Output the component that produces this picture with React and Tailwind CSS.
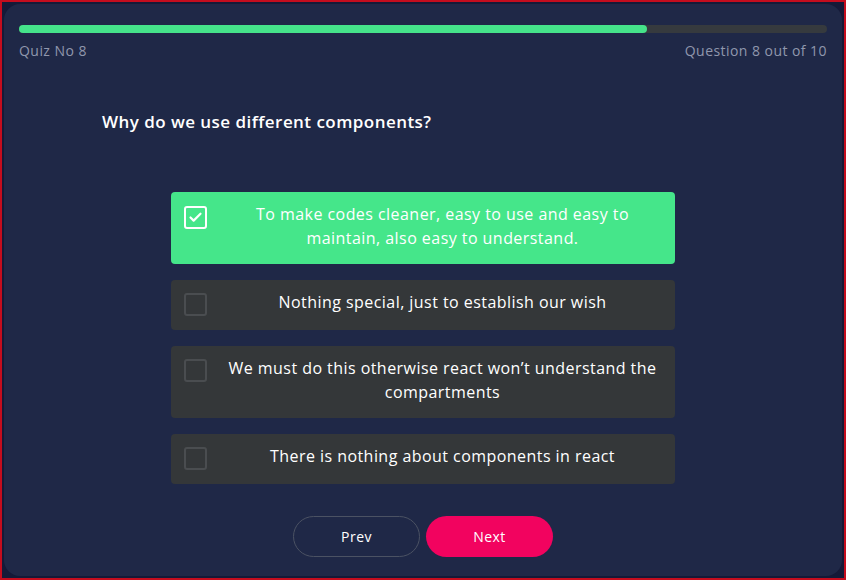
import { Check } from 'lucide-react'

const options = [
  'To make codes cleaner, easy to use and easy to maintain, also easy to understand.',
  'Nothing special, just to establish our wish',
  'We must do this otherwise react won’t understand the compartments',
  'There is nothing about components in react',
]

export default function App() {
  const selected = 0

  return (
    <div className="w-[846px] h-[580px] border-2 border-[#c40d1e] bg-[#151a38] p-[2px] font-['Open_Sans',sans-serif] tracking-[0.45px]">
      <div className="h-full rounded-2xl bg-[#1f2847] px-[15px] pt-[21px] flex flex-col">
        <div className="h-2 w-full rounded-full bg-[#363a3e]">
          <div className="h-2 w-[628px] rounded-full bg-[#45e38a]" />
        </div>
        <div className="mt-[8px] flex justify-between text-sm text-[#9097ad] leading-5">
          <span>Quiz No 8</span>
          <span>Question 8 out of 10</span>
        </div>

        <h1 className="mt-[49px] pl-[83px] text-[17px] font-semibold leading-6 text-white">
          Why do we use different components?
        </h1>

        <div className="mt-[58px] mx-auto w-[504px] flex flex-col gap-4">
          {options.map((opt, i) => (
            <div
              key={i}
              className={
                i === selected
                  ? 'flex items-start rounded bg-[#45e68a] pl-[13px] pt-[10px] pb-[14px]'
                  : 'flex items-start rounded bg-[#343739] pl-[13px] pt-[10px] pb-[14px]'
              }
            >
              <div
                className={
                  i === selected
                    ? 'w-[23px] h-[23px] shrink-0 mt-[4px] rounded-[3px] border-2 border-white flex items-center justify-center'
                    : 'w-[23px] h-[23px] shrink-0 mt-[3px] rounded-[3px] border-2 border-[#4a4d50]'
                }
              >
                {i === selected && <Check className="w-[15px] h-[15px] text-white" strokeWidth={3.5} />}
              </div>
              <div className="flex-1 flex justify-center pl-[3px]">
                <p className="max-w-[440px] text-center text-base leading-6 text-white">{opt}</p>
              </div>
            </div>
          ))}
        </div>

        <div className="mt-8 flex justify-center gap-[6px]">
          <button className="w-[127px] h-[41px] rounded-full border border-[#4b5263] text-sm font-medium text-white">
            Prev
          </button>
          <button className="w-[127px] h-[41px] rounded-full bg-[#f2035f] text-sm font-medium text-white">
            Next
          </button>
        </div>
      </div>
    </div>
  )
}
